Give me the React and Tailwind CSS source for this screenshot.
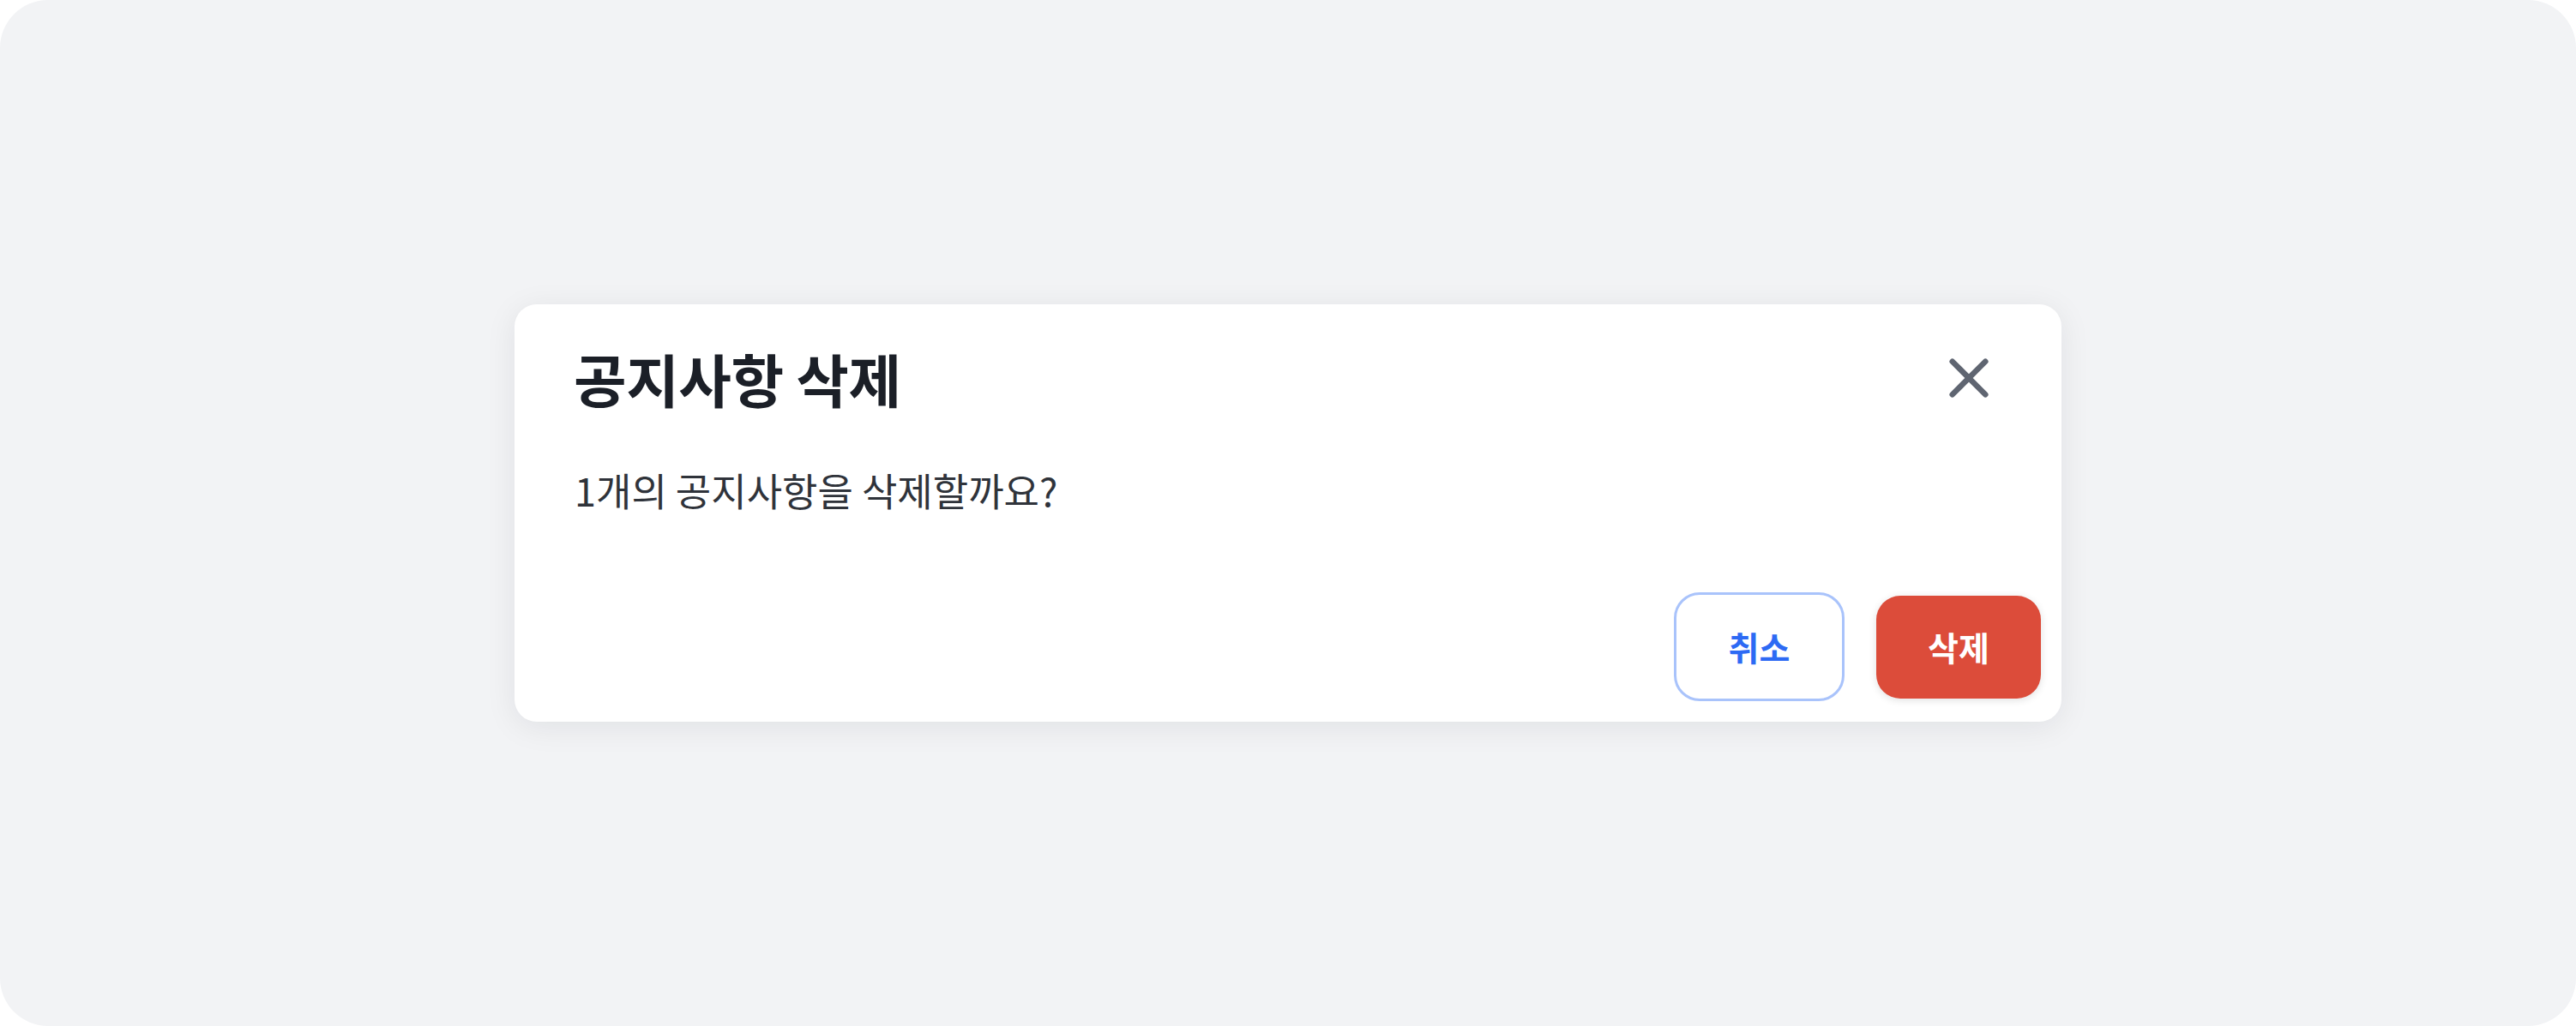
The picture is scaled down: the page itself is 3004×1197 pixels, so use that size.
import React from 'react';

const font = { fontFamily: '"Noto Sans CJK KR", "Noto Sans", sans-serif' };

export default function App() {
  return (
    <div className="w-[3004px] h-[1197px] bg-white" style={font}>
      <div className="w-full h-full rounded-[56px] bg-[#f2f3f5] flex items-center justify-center">
        {/* Dialog */}
        <div className="w-[1804px] h-[487px] bg-white rounded-[26px] shadow-[0_6px_36px_rgba(17,24,39,0.08)] flex flex-col">
          {/* ── HEADER ── */}
          <div className="flex items-center justify-between pt-[44px] pl-[69px] pr-[66px]">
            <h2 className="text-[67px] leading-[72px] font-bold text-[#1b1f27] tracking-[-0.5px]">공지사항 삭제</h2>
            <button className="w-[84px] h-[84px] flex items-center justify-center text-[#5f6571]">
              <svg className="w-[84px] h-[84px]" viewBox="0 0 24 24" fill="none" stroke="currentColor" strokeWidth="1.9" strokeLinecap="round">
                <path d="M6.5 6.5l11 11M17.5 6.5l-11 11" />
              </svg>
            </button>
          </div>

          {/* ── BODY ── */}
          <p className="mt-[61px] pl-[70px] text-[45px] leading-[56px] text-[#2f333a]">1개의 공지사항을 삭제할까요?</p>

          {/* ── ACTIONS ── */}
          <div className="mt-[91px] flex items-center justify-end gap-[37px] pr-[24px]">
            <button className="w-[199px] h-[127px] rounded-[30px] border-[3px] border-[#a9c3fb] bg-white text-[39px] font-bold text-[#2d6af4]">
              취소
            </button>
            <button className="w-[192px] h-[120px] rounded-[28px] bg-[#dc4c3a] text-[39px] font-bold text-white shadow-[0_2px_10px_rgba(0,0,0,0.12)]">
              삭제
            </button>
          </div>
        </div>
      </div>
    </div>
  );
}
